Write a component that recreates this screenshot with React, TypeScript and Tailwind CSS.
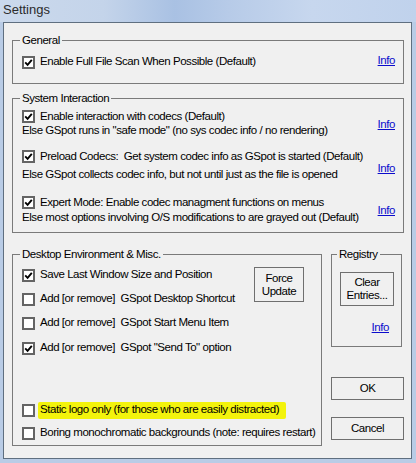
import React from "react";

const font = { fontFamily: '"Liberation Sans", Arial, sans-serif' };

function Check({ checked }: { checked?: boolean }) {
  return (
    <span className="inline-flex w-[13px] h-[13px] shrink-0 items-center justify-center border-2 border-[#646464] bg-white">
      {checked && (
        <svg width="9" height="9" viewBox="0 0 9 9">
          <path d="M1.2 4.3 L3.6 6.8 L7.8 1.8" fill="none" stroke="#000" strokeWidth="1.9" />
        </svg>
      )}
    </span>
  );
}

function Info({ className = "" }: { className?: string }) {
  return <span className={"text-[#0b0bcc] underline leading-[14px] " + className}>Info</span>;
}

function Legend({ children }: { children: React.ReactNode }) {
  return <legend className="px-[2px] -ml-[2px] leading-[14px]">{children}</legend>;
}

function CheckRow({ checked, children, className = "" }: { checked?: boolean; children: React.ReactNode; className?: string }) {
  return (
    <div className={"flex items-center h-[14px] " + className}>
      <Check checked={checked} />
      <span className="ml-[5px] whitespace-nowrap">{children}</span>
    </div>
  );
}

function Button({ children, className = "" }: { children: React.ReactNode; className?: string }) {
  return (
    <div className={"flex flex-col items-center justify-center border border-[#6f6f6f] bg-[#f0f0f0] leading-[13px] text-center " + className}>
      {children}
    </div>
  );
}

export default function App() {
  return (
    <div
      className="w-[416px] h-[463px] flex flex-col bg-[#b9cce6] text-[11.5px] tracking-[-0.45px] text-black overflow-hidden"
      style={font}
    >
      <div className="h-[22px] shrink-0 flex items-center pl-[3px] bg-[linear-gradient(90deg,#cbd9ec_0%,#c4d4ea_25%,#a9c1e3_42%,#b7cbe8_55%,#c7d7ee_75%,#c0d2ec_100%)]">
        <span className="text-[13px] tracking-normal text-[#2b2b2b] -mt-[2px]">Settings</span>
      </div>
      <div className="flex-1 ml-[3px] mr-[4px] mb-[4px] border border-[#5f6f80] bg-[#f0f0f0] flex flex-col pt-[10px] pl-[8px] pr-[7px]">
        {/* General */}
        <fieldset className="min-w-0 h-[51px] w-[392px] border border-[#7a7a7a] pl-[9px] pr-[8px] flex flex-col">
          <Legend>General</Legend>
          <div className="flex items-center justify-between mt-[8px]">
            <CheckRow checked>Enable Full File Scan When Possible (Default)</CheckRow>
            <Info className="-mt-[4px]" />
          </div>
        </fieldset>

        {/* System Interaction */}
        <fieldset className="min-w-0 mt-[7px] h-[142px] w-[392px] border border-[#7a7a7a] pl-[9px] pr-[8px] flex flex-col">
          <Legend>System Interaction</Legend>
          <div className="flex items-center justify-between mt-[5px]">
            <div className="flex flex-col">
              <div className="flex items-center h-[13px]">
                <Check checked />
                <span className="ml-[5px] whitespace-nowrap">Enable interaction with codecs (Default)</span>
              </div>
              <span className="leading-[14px] whitespace-nowrap">Else GSpot runs in "safe mode" (no sys codec info / no rendering)</span>
            </div>
            <Info />
          </div>
          <div className="flex items-center justify-between mt-[13px]">
            <div className="flex flex-col">
              <div className="flex items-center h-[13px]">
                <Check checked />
                <span className="ml-[5px] whitespace-nowrap">Preload Codecs:&nbsp; Get system codec info as GSpot is started (Default)</span>
              </div>
              <span className="leading-[14px] mt-[4px] whitespace-nowrap">Else GSpot collects codec info, but not until just as the file is opened</span>
            </div>
            <Info className="mt-[4px]" />
          </div>
          <div className="flex items-center justify-between mt-[15px]">
            <div className="flex flex-col">
              <div className="flex items-center h-[13px]">
                <Check checked />
                <span className="ml-[5px] whitespace-nowrap">Expert Mode: Enable codec managment functions on menus</span>
              </div>
              <span className="leading-[14px] mt-[1px] whitespace-nowrap">Else most options involving O/S modifications to are grayed out (Default)</span>
            </div>
            <Info />
          </div>
        </fieldset>

        {/* Bottom row */}
        <div className="mt-[14px] flex">
          <fieldset className="min-w-0 h-[199px] w-[312px] border border-[#7a7a7a] pl-[9px] pr-[17px] pb-[5px] flex flex-col">
            <Legend>Desktop Environment &amp; Misc.</Legend>
            <div className="flex justify-between">
              <div className="flex flex-col">
                <CheckRow checked className="mt-[7px]">Save Last Window Size and Position</CheckRow>
                <CheckRow className="mt-[10px]">Add [or remove]&nbsp; GSpot Desktop Shortcut</CheckRow>
                <CheckRow className="mt-[10px]">Add [or remove]&nbsp; GSpot Start Menu Item</CheckRow>
                <CheckRow checked className="mt-[11px]">Add [or remove]&nbsp; GSpot "Send To" option</CheckRow>
              </div>
              <Button className="mt-[6px] w-[50px] h-[35px]">
                <span>Force</span>
                <span>Update</span>
              </Button>
            </div>
            <div className="mt-auto flex flex-col">
              <div className="flex items-center h-[14px]">
                <Check />
                <span className="ml-[3px] pl-[2px] pr-[7px] h-[17px] flex items-center bg-[#f3f30c] rounded-[2px] whitespace-nowrap">
                  Static logo only (for those who are easily distracted)
                </span>
              </div>
              <CheckRow className="mt-[9px]">Boring monochromatic backgrounds (note: requires restart)</CheckRow>
            </div>
          </fieldset>

          <div className="ml-[9px] w-[73px] flex flex-col">
            <fieldset className="min-w-0 h-[100px] w-[71px] border border-[#7a7a7a] pl-[7px] pr-[12px] flex flex-col">
              <Legend>Registry</Legend>
              <Button className="mt-[11px] ml-[1px] w-[54px] h-[34px]">
                <span>Clear</span>
                <span>Entries...</span>
              </Button>
              <Info className="self-end mt-[14px]" />
            </fieldset>
            <Button className="mt-[30px] w-[73px] h-[23px]">OK</Button>
            <Button className="mt-[17px] w-[73px] h-[23px]">Cancel</Button>
          </div>
        </div>
      </div>
    </div>
  );
}
